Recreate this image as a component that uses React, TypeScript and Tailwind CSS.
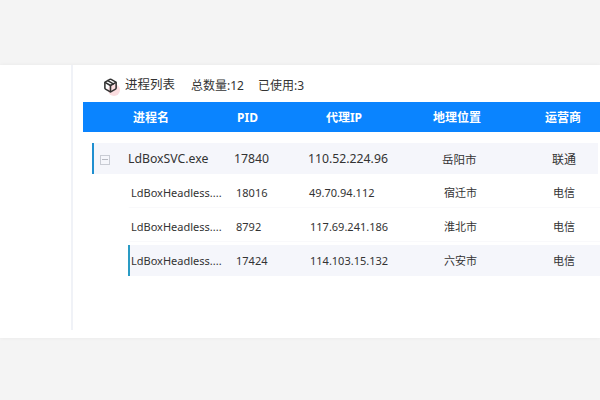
import { Package } from "lucide-react";

const font = { fontFamily: '"Noto Sans", "Noto Sans CJK SC", sans-serif' };

type Row = { name: string; pid: string; ip: string; city: string; isp: string };

const children: (Row & { ipClass: string; active?: boolean })[] = [
  { name: "LdBoxHeadless....", pid: "18016", ip: "49.70.94.112", city: "宿迁市", isp: "电信", ipClass: "w-[135px]" },
  { name: "LdBoxHeadless....", pid: "8792", ip: "117.69.241.186", city: "淮北市", isp: "电信", ipClass: "w-[135px] pl-[1px]" },
  { name: "LdBoxHeadless....", pid: "17424", ip: "114.103.15.132", city: "六安市", isp: "电信", ipClass: "w-[135px] pl-[1px]", active: true },
];

function ChildRow({ row }: { row: (typeof children)[number] }) {
  return (
    <div
      className={
        "ml-[45px] flex h-[31px] items-center pt-[2px] text-[11px] text-[#333] " +
        (row.active
          ? "border-l-2 border-[#2a9bc4] bg-[#f5f6fb]"
          : "border-b border-l-2 border-b-[#f9f9fb] border-l-transparent bg-white")
      }
    >
      <div className="w-[106px] pl-[1px] whitespace-nowrap">{row.name}</div>
      <div className="w-[73px]">{row.pid}</div>
      <div className={row.ipClass}>{row.ip}</div>
      <div className="w-[109px]">{row.city}</div>
      <div>{row.isp}</div>
    </div>
  );
}

export default function App() {
  return (
    <div className="flex h-[400px] w-[600px] flex-col overflow-hidden bg-[#f4f4f4]" style={font}>
      <div className="mt-[65px] flex h-[273px] bg-white shadow-[0_0_4px_rgba(0,0,0,0.05)]">
        <div className="h-[265px] w-[73px] border-r-2 border-[#f0f2f7]" />
        <div className="min-w-0 flex-1 pl-[10px]">
          <div className="flex h-[37px] items-center pt-1 pl-[17px] text-[#333]">
            <span className="relative flex h-5 w-5 items-center justify-center">
              <span className="absolute bottom-0 right-0 h-3 w-3 rounded-full bg-[#fbdde0]" />
              <Package className="relative h-[15px] w-[15px] text-[#333]" strokeWidth={2.5} />
            </span>
            <span className="ml-[5px] text-[12.5px]">进程列表</span>
            <span className="ml-[16px] text-[12px]">总数量:12</span>
            <span className="ml-[14px] text-[12px]">已使用:3</span>
          </div>
          <div className="flex h-[30px] items-center bg-[#0a84ff] pt-px text-[12px] font-bold text-white">
            <div className="w-[86px] text-right">进程名</div>
            <div className="w-[89px] text-right">PID</div>
            <div className="w-[104px] text-right">代理IP</div>
            <div className="w-[119px] text-right">地理位置</div>
            <div className="w-[100px] text-right">运营商</div>
          </div>
          <div className="mt-[11px] ml-[9px] mr-[2px] flex h-[31px] items-center border-l-2 border-[#1f8fd0] bg-[#f5f6fb] pt-[2px] text-[12.25px] text-[#333]">
            <span className="ml-[6px] flex h-[10px] w-[10px] items-center justify-center border border-[#c9ccd4]">
              <span className="h-px w-[6px] bg-[#b5b8c0]" />
            </span>
            <div className="ml-[18px] w-[106px] whitespace-nowrap">LdBoxSVC.exe</div>
            <div className="w-[74px]">17840</div>
            <div className="w-[134px]">110.52.224.96</div>
            <div className="w-[110px] text-[11.5px]">岳阳市</div>
            <div className="text-[12px]">联通</div>
          </div>
          <div className="mt-[3px] flex flex-col gap-[3px]">
            {children.map((row) => (
              <ChildRow key={row.pid} row={row} />
            ))}
          </div>
        </div>
      </div>
    </div>
  );
}
